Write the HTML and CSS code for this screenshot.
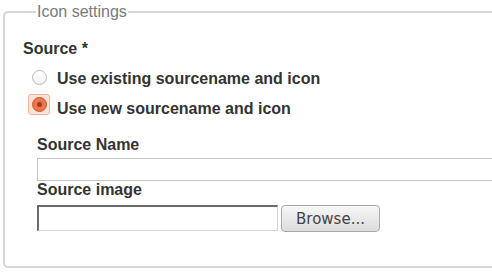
FILE: index.html
```html
<!DOCTYPE html>
<html>
<head>
    <meta charset="utf-8">
    <link rel="stylesheet" href="styles.css">
</head>
<body>
<fieldset class="icon_settings">
    <legend>Icon settings</legend>
    <div class="field_label">Source *</div>
    <div class="radio_list">
        <label class="radio_row">
            <span class="radio_wrap"><i class="radio"></i></span>
            <span class="radio_text">Use existing sourcename and icon</span>
        </label>
        <label class="radio_row">
            <span class="radio_wrap is_focus"><i class="radio is_checked"></i></span>
            <span class="radio_text">Use new sourcename and icon</span>
        </label>
    </div>
    <div class="sub_fields">
        <div class="field_label">Source Name</div>
        <div class="text_input"></div>
        <div class="field_label">Source image</div>
        <div class="file_row">
            <div class="file_input"></div>
            <button type="button" class="browse">Browse...</button>
        </div>
    </div>
</fieldset>
</body>
</html>
```

FILE: styles.css
```css
html, body {
    margin: 0;
    padding: 0;
    background: #fff;
    overflow: hidden;
}

body {
    width: 492px;
    height: 272px;
    font-family: "Liberation Sans", Arial, sans-serif;
    color: #333;
}

.icon_settings {
    box-sizing: border-box;
    width: 560px;
    height: 265px;
    margin: 3px 0 0 3px;
    padding: 0 0 0 18px;
    border: 2px solid #d6d6d6;
    border-radius: 5px;
}

.icon_settings legend {
    margin-left: 13px;
    padding: 0 1px;
    font-size: 16px;
    line-height: 18px;
    color: #7a7a7a;
}

.field_label {
    font-size: 16px;
    line-height: 18px;
    font-weight: bold;
    color: #333;
}

.icon_settings > .field_label {
    margin-top: 19px;
}

.radio_list {
    display: flex;
    flex-direction: column;
    margin-top: 6px;
    padding-left: 5px;
}

.radio_row {
    display: flex;
    align-items: flex-start;
    height: 30px;
}

.radio_wrap {
    display: flex;
    align-items: center;
    justify-content: center;
    box-sizing: border-box;
    width: 22px;
    height: 21px;
    margin-top: 3px;
    border: 1px solid transparent;
    border-radius: 3px;
}

.radio_wrap.is_focus {
    margin-top: 0;
    border-color: #f0b39c;
    background: #fbe2d7;
}

.radio {
    display: block;
    box-sizing: border-box;
    width: 15px;
    height: 15px;
    border: 1px solid #b9b9b9;
    border-radius: 50%;
    background: linear-gradient(#fff, #f2f2f2);
}

.radio.is_checked {
    position: relative;
    border-color: #c85a33;
    background: #ea774e;
}

.radio.is_checked::after {
    content: '';
    position: absolute;
    top: 4px;
    left: 4px;
    width: 5px;
    height: 5px;
    border-radius: 50%;
    background: #a8391a;
}

.radio_text {
    margin: 6px 0 0 7px;
    font-size: 16px;
    line-height: 18px;
    font-weight: bold;
    color: #333;
}

.sub_fields {
    padding: 12px 0 0 14px;
}

.text_input {
    box-sizing: border-box;
    height: 23px;
    margin: 4px 0 0;
    border: 1px solid #c4c4c4;
    background: #fff;
}

.file_row {
    display: flex;
    align-items: flex-start;
    gap: 3px;
    margin-top: 6px;
}

.file_input {
    box-sizing: border-box;
    width: 241px;
    height: 26px;
    border: 1px solid #d4d4d4;
    border-top: 2px solid #6a6a6a;
    border-left: 2px solid #6a6a6a;
}

.browse {
    box-sizing: border-box;
    width: 99px;
    height: 27px;
    padding: 0;
    border: 1px solid #a9a9a9;
    border-radius: 4px;
    background: linear-gradient(#f7f7f7, #dcdcdc);
    font-family: "DejaVu Sans", sans-serif;
    font-size: 15px;
    color: #444;
}
```
